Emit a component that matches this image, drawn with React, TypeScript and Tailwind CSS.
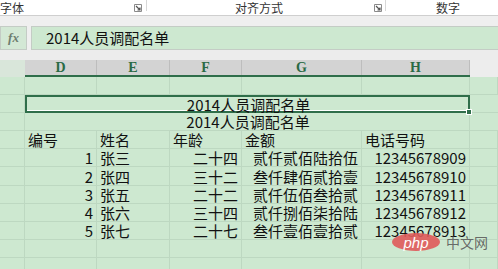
const cjk = "font-['Noto_Sans_CJK_SC',sans-serif]";

const cols = [25, 72, 73, 72, 120, 108, 28];

type Cell = { text?: string; align?: "left" | "right" | "center" };

const rows: Cell[][] = [
  [],
  [],
  [],
  [{}, { text: "编号" }, { text: "姓名" }, { text: "年龄" }, { text: "金额" }, { text: "电话号码" }],
  [{}, { text: "1", align: "right" }, { text: "张三" }, { text: "二十四", align: "right" }, { text: "贰仟贰佰陆拾伍", align: "right" }, { text: "12345678909", align: "right" }],
  [{}, { text: "2", align: "right" }, { text: "张四" }, { text: "三十二", align: "right" }, { text: "叁仟肆佰贰拾壹", align: "right" }, { text: "12345678910", align: "right" }],
  [{}, { text: "3", align: "right" }, { text: "张五" }, { text: "二十二", align: "right" }, { text: "贰仟伍佰叁拾贰", align: "right" }, { text: "12345678911", align: "right" }],
  [{}, { text: "4", align: "right" }, { text: "张六" }, { text: "三十四", align: "right" }, { text: "贰仟捌佰柒拾陆", align: "right" }, { text: "12345678912", align: "right" }],
  [{}, { text: "5", align: "right" }, { text: "张七" }, { text: "二十七", align: "right" }, { text: "叁仟壹佰壹拾贰", align: "right" }, { text: "12345678913", align: "right" }],
  [],
  [],
];

function Launcher() {
  return (
    <svg width="8" height="8" viewBox="0 0 8 8" className="shrink-0">
      <path d="M0.5 0.5 H7.5 V7.5 H0.5 Z" fill="none" stroke="#8a8a8a" strokeWidth="1" />
      <path d="M2 2 L6 6 M6 3.5 V6 H3.5" fill="none" stroke="#555" strokeWidth="1.2" />
    </svg>
  );
}

function GridRow({ cells }: { cells: Cell[] }) {
  return (
    <div className="flex h-[18.1px]">
      {cols.map((w, i) => {
        const c = cells[i];
        const align = c?.align === "right" ? "justify-end pr-[3px]" : "justify-start pl-[3px]";
        return (
          <div
            key={i}
            style={{ width: w }}
            className={`flex items-center shrink-0 border-r border-b border-[#bdd8c1] text-[15px] leading-none text-[#111] whitespace-nowrap ${align}`}
          >
            {c?.text}
          </div>
        );
      })}
    </div>
  );
}

export default function App() {
  return (
    <div className={`w-[498px] h-[269px] overflow-hidden relative bg-[#cde8d0] ${cjk}`}>
      {/* ribbon group labels */}
      <div className="flex items-start h-[16px] bg-white border-b border-[#cfcfcf] text-[12px] leading-[13px] text-[#333]">
        <div className="w-[146px] h-[15px] flex items-start justify-between pr-[4px]">
          <span className="mt-[1px]">字体</span>
          <span className="mt-[4px]"><Launcher /></span>
        </div>
        <div className="w-px h-[11px] bg-[#d8d8d8]" />
        <div className="w-[238px] h-[15px] flex items-start pr-[3px]">
          <span className="mt-[1px] ml-[88px]">对齐方式</span>
          <span className="mt-[4px] ml-auto"><Launcher /></span>
        </div>
        <div className="w-px h-[11px] bg-[#d8d8d8]" />
        <div className="flex-1 h-[15px] flex items-start">
          <span className="mt-[1px] ml-[50px]">数字</span>
        </div>
      </div>

      <div className="h-[10px] bg-[#efefef]" />

      {/* formula bar */}
      <div className="flex h-[24px] bg-[#efefef]">
        <div className="w-[27px] bg-[#d3e8d5] border border-[#c4ccc5] flex items-center justify-center font-['Liberation_Serif',serif] italic font-bold text-[13px] text-[#6d7d6f]">
          fx
        </div>
        <div className="flex-1 ml-[4px] bg-[#cde8d0] border-y border-l border-[#c4ccc5] flex items-center pl-[14px] text-[15px] text-[#111]">
          2014人员调配名单
        </div>
      </div>

      <div className="h-[10px] bg-[#ececec]" />

      {/* column headers */}
      <div className="flex h-[17px]">
        <div className="w-[25px] bg-[#d9e6da]" />
        <div className="flex border-b-2 border-[#2f6e4a]">
          {["D", "E", "F", "G", "H"].map((l, i) => (
            <div
              key={l}
              style={{ width: cols[i + 1] }}
              className="h-[15px] bg-[#d3d3d3] border-r border-[#bdbdbd] flex items-center justify-center font-['Liberation_Serif',serif] font-bold text-[14px] leading-none text-[#2a6a45]"
            >
              {l}
            </div>
          ))}
        </div>
        <div className="flex-1 bg-[#ededed]" />
      </div>

      {/* grid */}
      <div className="flex flex-col">
        <GridRow cells={rows[0]} />
        {/* merged selected title */}
        <div className="flex h-[18.1px]">
          <div className="w-[25px] shrink-0 border-r border-b border-[#bdd8c1]" />
          <div className="w-[445px] shrink-0 relative border-2 border-[#2f6e4a] shadow-[inset_0_-1px_0_#ffffff] flex items-center justify-center text-[15px] leading-none text-[#111]">
            <span className="ml-[2px]">2014人员调配名单</span>
            <div className="absolute -right-[4px] -bottom-[4px] w-[6px] h-[6px] bg-[#2f6e4a] border border-white" />
          </div>
          <div className="w-[28px] shrink-0 border-b border-[#bdd8c1]" />
        </div>
        <div className="flex h-[18.1px]">
          <div className="w-[25px] shrink-0 border-r border-b border-[#bdd8c1]" />
          <div className="w-[445px] shrink-0 border-r border-b border-[#bdd8c1] flex items-center justify-center text-[15px] leading-none text-[#111]">
            <span className="ml-[2px]">2014人员调配名单</span>
          </div>
          <div className="w-[28px] shrink-0 border-b border-[#bdd8c1]" />
        </div>
        {rows.slice(3).map((r, i) => (
          <GridRow key={i} cells={r} />
        ))}
      </div>

      {/* watermark */}
      <div className="absolute left-[392px] top-[233px] flex items-center gap-[6px]">
        <div className="w-[48px] h-[18px] rounded-[50%] bg-[#e05a5a]/90 flex items-center justify-center font-['Liberation_Sans',sans-serif] italic text-[15px] leading-none text-white">
          php
        </div>
        <span className="text-[14px] leading-none text-[#5a5a5a]/90">中文网</span>
      </div>
    </div>
  );
}
